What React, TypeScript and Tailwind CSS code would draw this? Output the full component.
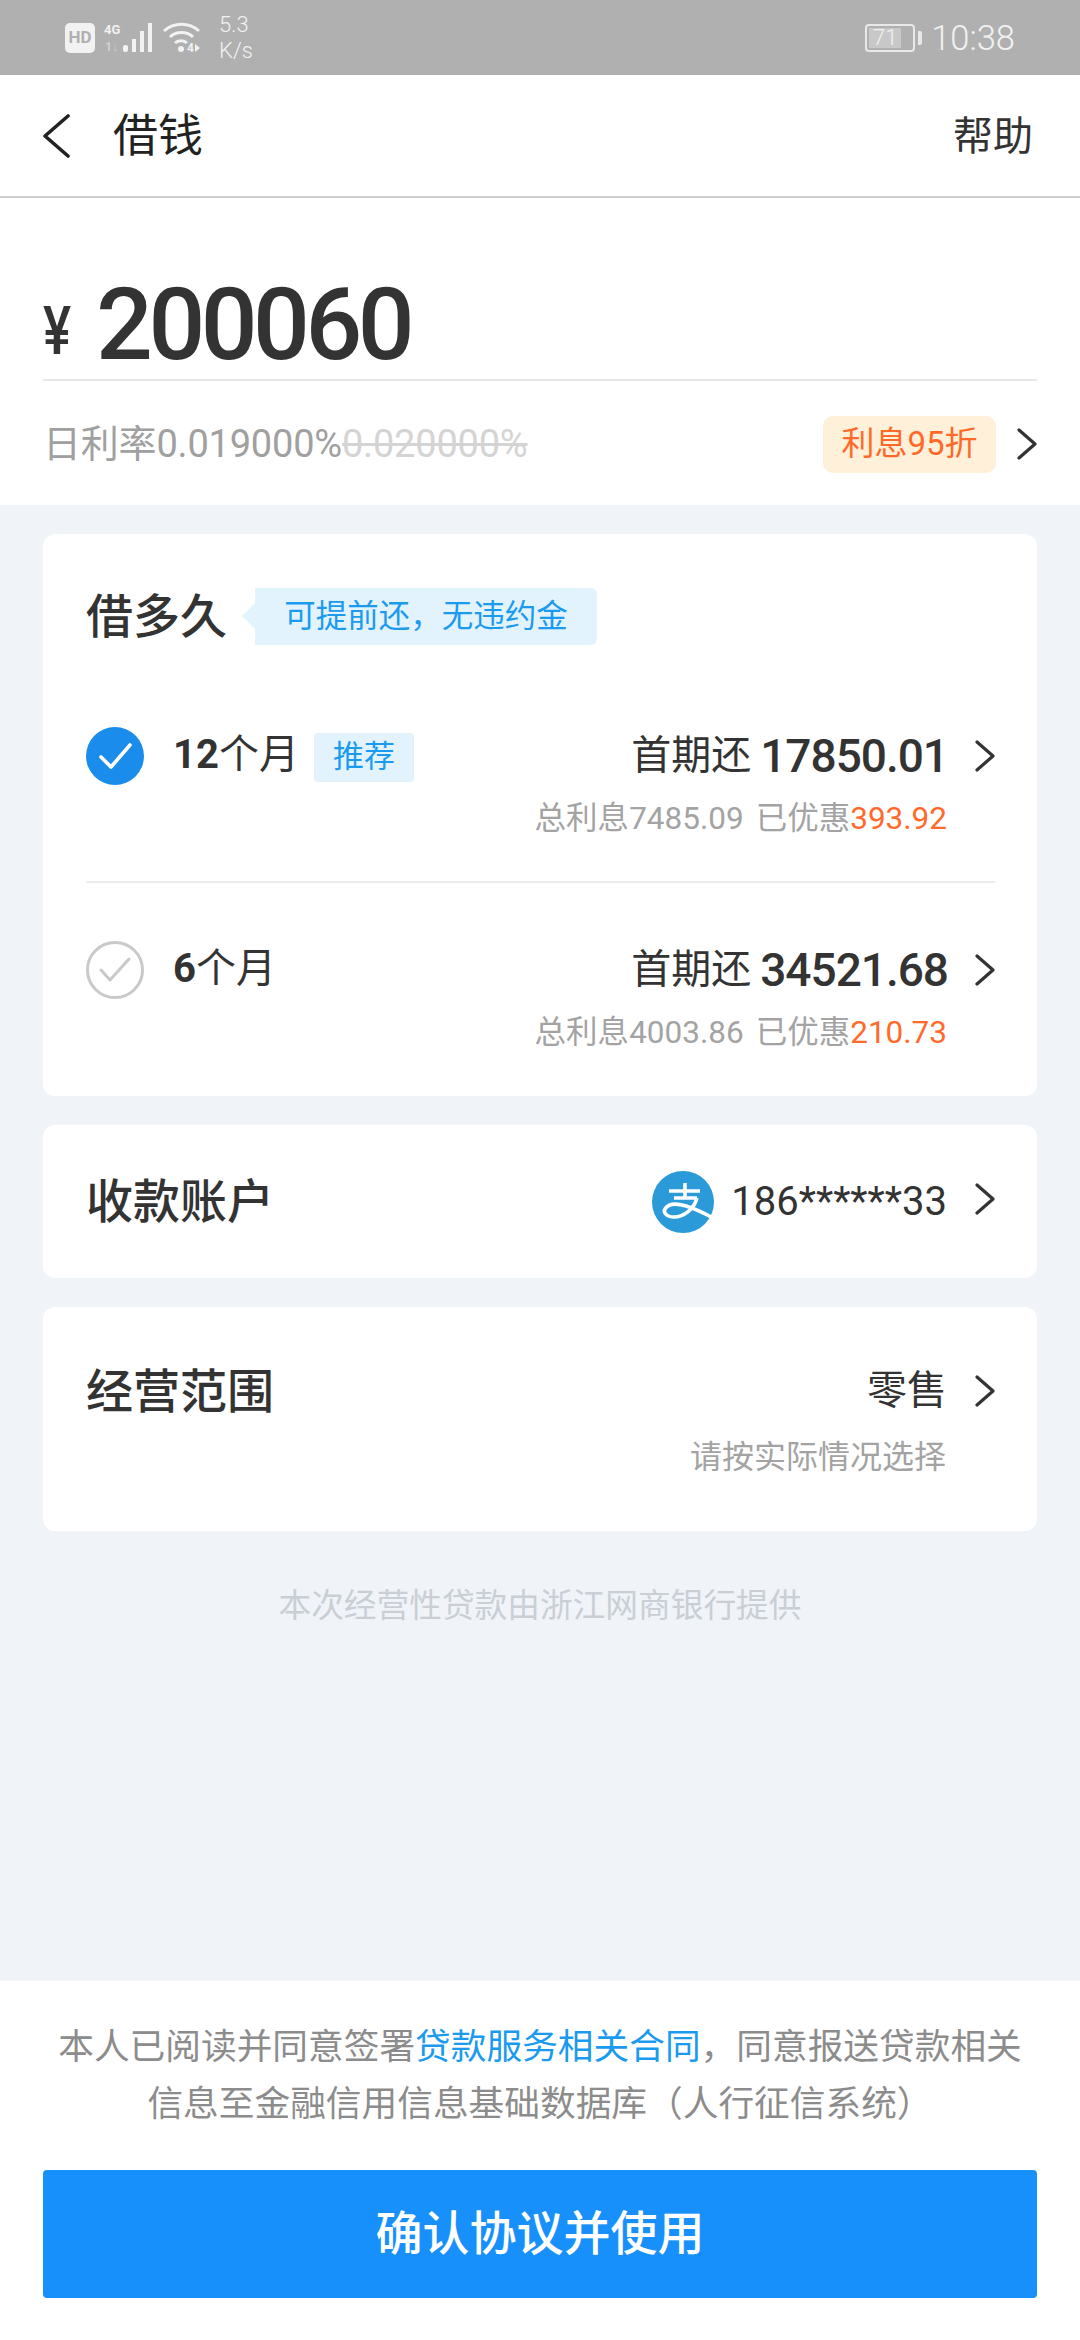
const FONT = "font-['Roboto','Noto_Sans_CJK_SC',sans-serif]";

function Arrow({ className = '' }: { className?: string }) {
  return (
    <svg width="20" height="32" viewBox="0 0 20 32" fill="none" className={`shrink-0 ${className}`}>
      <path d="M2 2 L18 16 L2 30" stroke="#333" strokeWidth="3.2" strokeLinecap="round" strokeLinejoin="round" />
    </svg>
  );
}

function CheckCircle({ active }: { active: boolean }) {
  if (active) {
    return (
      <svg width="58" height="58" viewBox="0 0 58 58" className="shrink-0">
        <circle cx="29" cy="29" r="29" fill="#1a8cec" />
        <path d="M15 30 L25 40 L44 18" fill="none" stroke="#fff" strokeWidth="3.6" strokeLinecap="round" strokeLinejoin="round" />
      </svg>
    );
  }
  return (
    <svg width="58" height="58" viewBox="0 0 58 58" className="shrink-0">
      <circle cx="29" cy="29" r="27.5" fill="#fff" stroke="#c9c9c9" strokeWidth="3" />
      <path d="M15 29 L24 39 L43 18" fill="none" stroke="#c9c9c9" strokeWidth="3" strokeLinecap="round" strokeLinejoin="round" />
    </svg>
  );
}

function AlipayLogo() {
  return (
    <svg width="62" height="62" viewBox="0 0 62 62" className="shrink-0">
      <circle cx="31" cy="31" r="31" fill="#2a9bd8" />
      <path d="M17 20 H48 M33 12 V27 M22 27 H45" stroke="#fff" strokeWidth="3.6" fill="none" />
      <path d="M45 27 C42 38 32 46 22 46 C14 46 11 41 13 38 C16 33 24 32 34 35 C44 38 52 42 61 47" stroke="#fff" strokeWidth="3.6" fill="none" />
    </svg>
  );
}

function StatusBar() {
  return (
    <div className="h-[75px] bg-[#b0b0b0] flex items-center justify-between pl-[65px] pr-[65px] text-[#f2f2f2]">
      <div className="flex items-center">
        <div className="w-[30px] h-[30px] rounded-[5px] bg-[#f2f2f2] text-[#b0b0b0] text-[17px] font-bold flex items-center justify-center">HD</div>
        <svg width="58" height="32" viewBox="0 0 58 32" className="ml-[9px]">
          <text x="0" y="12" fontSize="13" fontWeight="700" fill="#f2f2f2" fontFamily="Roboto">4G</text>
          <text x="1" y="29" fontSize="12" fontWeight="700" fill="#cfcfcf" fontFamily="Roboto">1↓</text>
          <rect x="19" y="23" width="5" height="7" rx="2" fill="#f2f2f2" />
          <rect x="28" y="17" width="4" height="13" fill="#f2f2f2" />
          <rect x="36" y="9" width="4" height="21" fill="#f2f2f2" />
          <rect x="44" y="1" width="4" height="29" fill="#f2f2f2" />
        </svg>
        <svg width="38" height="32" viewBox="0 0 38 32" className="ml-[1px]">
          <path d="M1 9 C11 0 26 0 36 9" fill="none" stroke="#f2f2f2" strokeWidth="3" />
          <path d="M7 15 C13 9 24 9 30 15" fill="none" stroke="#f2f2f2" strokeWidth="3" />
          <path d="M12 21 C15 18 21 18 24 21" fill="none" stroke="#f2f2f2" strokeWidth="3" />
          <circle cx="18" cy="27" r="3" fill="#f2f2f2" />
          <text x="24" y="30" fontSize="12" fontWeight="700" fill="#f2f2f2" fontFamily="Roboto">4</text>
          <path d="M32 22 L37 26 L32 30 Z" fill="#f2f2f2" />
        </svg>
        <div className="ml-[18px] flex flex-col text-[22px] leading-[26px] font-light">
          <span>5.3</span>
          <span>K/s</span>
        </div>
      </div>
      <div className="flex items-center">
        <div className="w-[50px] h-[28px] rounded-[4px] border-2 border-[#e8e8e8] p-[2px] flex items-stretch">
          <div className="w-[32px] bg-[#c8c8c8] flex items-center justify-center text-[22px] leading-none font-light">71</div>
        </div>
        <div className="w-[4px] h-[14px] rounded-r-[2px] bg-[#e8e8e8] ml-[3px]" />
        <span className="ml-[9px] mt-[1px] text-[34.5px] leading-none font-light">10:38</span>
      </div>
    </div>
  );
}

function PlanRow({
  months,
  tag,
  active,
  first,
  total,
  saved,
}: {
  months: string;
  tag?: string;
  active: boolean;
  first: string;
  total: string;
  saved: string;
}) {
  return (
    <div className="flex items-start">
      <CheckCircle active={active} />
      <div className="ml-[29px] mt-[3px] flex items-center h-[50px]">
        <span className="text-[40px] leading-none text-[#333]">
          <span className="font-bold">{months}</span>
          <span>个月</span>
        </span>
        {tag && (
          <span className="ml-[15px] mt-[5px] w-[100px] h-[49px] rounded-[4px] bg-[#e3f3fe] text-[#1a9bf0] text-[31px] flex items-center justify-center">
            {tag}
          </span>
        )}
      </div>
      <div className="ml-auto flex flex-col items-end">
        <div className="flex items-center h-[58px]">
          <span className="text-[40px] text-[#333]">首期还</span>
          <span className="ml-[9px] text-[46px] leading-none font-medium text-[#333] tracking-[-1px]">{first}</span>
          <Arrow className="ml-[27px]" />
        </div>
        <div className="mt-[13px] mr-[48px] text-[31.5px] leading-[42px] text-[#a3a3a3] whitespace-nowrap">
          总利息{total}
          <span className="ml-[12px]">已优惠</span>
          <span className="text-[#ff6a2b]">{saved}</span>
        </div>
      </div>
    </div>
  );
}

export default function App() {
  return (
    <div className={`${FONT} w-[1080px] min-h-[2340px] bg-[#f0f4f8] flex flex-col`}>
      <StatusBar />

      {/* nav */}
      <div className="h-[123px] bg-white border-b-2 border-[#cfcfcf] flex items-center pl-[42px] pr-[47px]">
        <svg width="28" height="44" viewBox="0 0 28 44" fill="none">
          <path d="M26 2 L3 22 L26 42" stroke="#222" strokeWidth="3.6" strokeLinecap="round" strokeLinejoin="round" />
        </svg>
        <span className="ml-[43px] mt-[2px] text-[45px] leading-none text-[#222]">借钱</span>
        <span className="ml-auto mt-[3px] text-[40px] leading-none text-[#333]">帮助</span>
      </div>

      {/* amount */}
      <div className="bg-white h-[307px] px-[43px] flex flex-col">
        <div className="h-[183px] flex items-end border-b-2 border-[#e8e8e8] pb-[4px]">
          <span className="text-[66px] leading-none font-medium text-[#333] mb-[10px] scale-x-[0.8] origin-left">¥</span>
          <span className="ml-[18px] text-[100px] leading-none font-medium text-[#333] tracking-[-4.5px]">200060</span>
        </div>
        <div className="flex items-center mt-[34px] h-[58px]">
          <span className="text-[38px] text-[#a0a0a0] tracking-[-0.2px]">
            日利率0.019000%<span className="text-[#d4d4d4] line-through">0.020000%</span>
          </span>
          <span className="ml-auto w-[173px] h-[57px] rounded-[10px] bg-[#fff0d9] text-[#ff6a2b] text-[33px] flex items-center justify-center">
            利息95折
          </span>
          <Arrow className="ml-[21px]" />
        </div>
      </div>

      <div className="px-[43px] pt-[29px] flex flex-col gap-[29px]">
        {/* term card */}
        <div className="bg-white rounded-[12px] h-[562px] pl-[43px] pr-[42px]">
          <div className="flex items-center pt-[54px] h-[111px]">
            <span className="text-[47px] leading-none font-medium text-[#333]">借多久</span>
            <div className="relative ml-[28px] w-[342px] h-[57px] rounded-r-[6px] bg-[#e3f3fe] text-[#1a9bf0] text-[31.5px] flex items-center justify-center">
              <span className="absolute left-[-13px] top-[15px] w-0 h-0 border-y-[13px] border-y-transparent border-r-[13px] border-r-[#e3f3fe]" />
              可提前还，无违约金
            </div>
          </div>
          <div className="mt-[82px] pb-[41px] border-b-2 border-[#ececec]">
            <PlanRow months="12" tag="推荐" active first="17850.01" total="7485.09" saved="393.92" />
          </div>
          <div className="mt-[58px]">
            <PlanRow months="6" active={false} first="34521.68" total="4003.86" saved="210.73" />
          </div>
        </div>

        {/* payout account */}
        <div className="bg-white rounded-[12px] h-[153px] pl-[43px] pr-[42px] flex items-center">
          <span className="text-[47px] leading-none font-medium text-[#333]">收款账户</span>
          <div className="ml-auto flex items-center">
            <AlipayLogo />
            <span className="ml-[17px] text-[40px] leading-none text-[#333]">186******33</span>
            <Arrow className="ml-[28px] mb-[6px]" />
          </div>
        </div>

        {/* business scope */}
        <div className="bg-white rounded-[12px] h-[224px] pl-[43px] pr-[42px] pt-[55px]">
          <div className="flex items-center h-[58px]">
            <span className="text-[47px] leading-none font-medium text-[#333]">经营范围</span>
            <span className="ml-auto text-[40px] leading-none text-[#333]">零售</span>
            <Arrow className="ml-[28px]" />
          </div>
          <div className="mt-[16px] mr-[49px] text-right text-[32px] leading-[42px] text-[#a3a3a3]">请按实际情况选择</div>
        </div>
      </div>

      <p className="mt-[52px] text-center text-[32.7px] leading-[46px] text-[#c9cfd5]">本次经营性贷款由浙江网商银行提供</p>

      <div className="flex-1" />

      {/* agreement */}
      <div className="bg-white h-[359px] px-[43px] pt-[38px]">
        <p className="text-center text-[35.7px] leading-[57px] text-[#8c8c8c]">
          本人已阅读并同意签署<span className="text-[#1a9bf0]">贷款服务相关合同</span>，同意报送贷款相关
          <br />
          信息至金融信用信息基础数据库（人行征信系统）
        </p>
        <button className="mt-[37px] w-full h-[128px] rounded-[4px] bg-[#1890fb] text-white text-[47px] font-medium">
          确认协议并使用
        </button>
      </div>
    </div>
  );
}
